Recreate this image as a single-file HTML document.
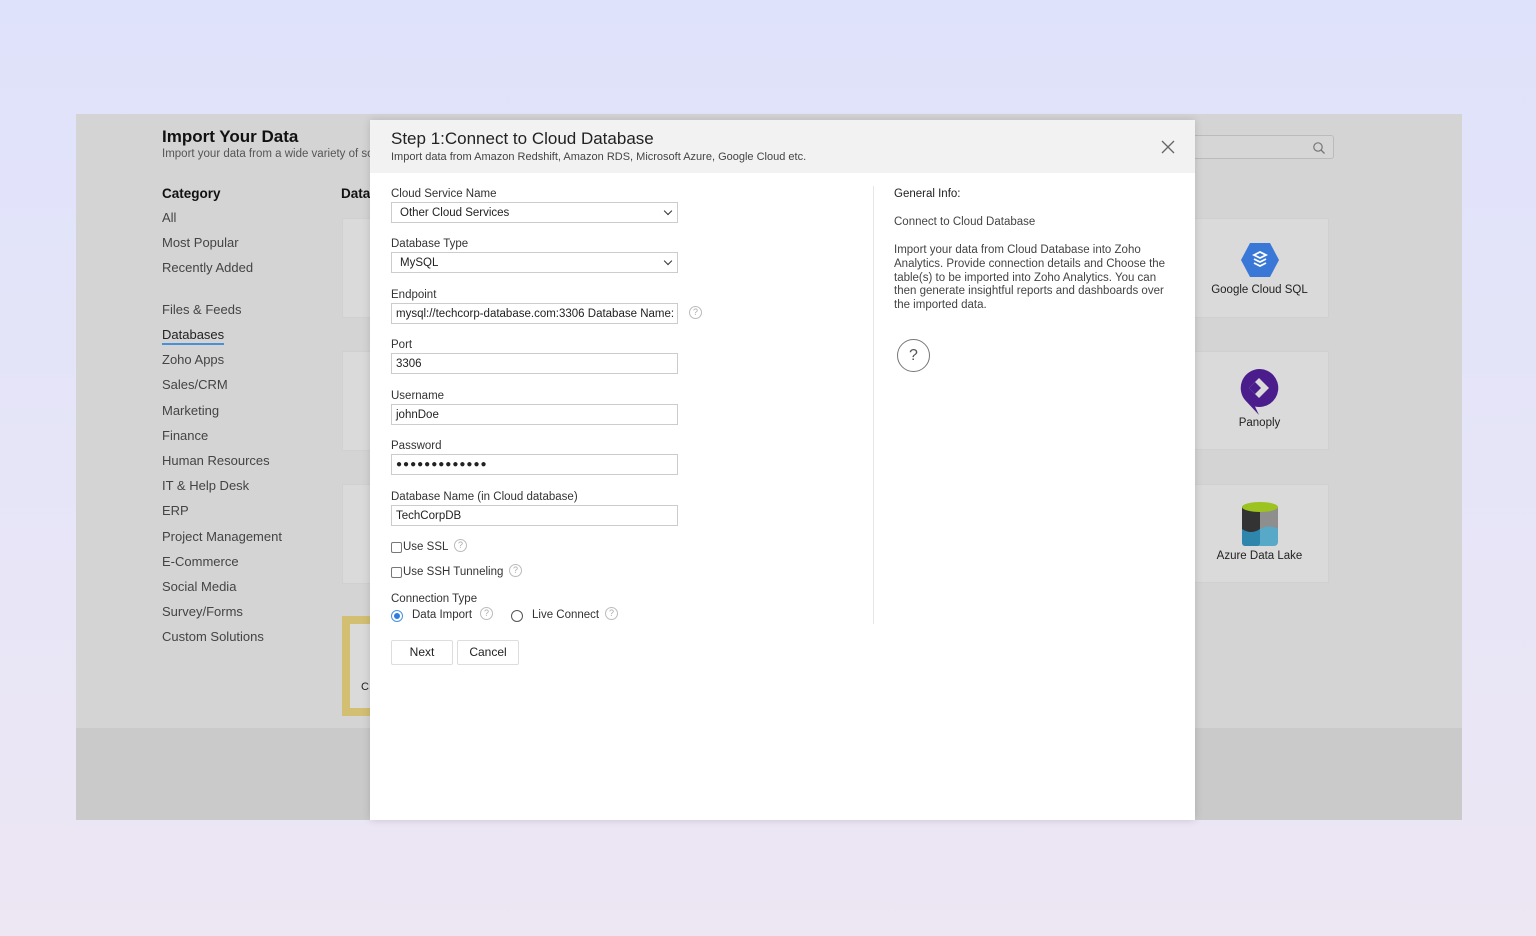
<!DOCTYPE html>
<html><head><style>
*{box-sizing:border-box;margin:0;padding:0}
body{width:1536px;height:936px;overflow:hidden;background:linear-gradient(180deg,#dfe2fb 0%,#e6e5f8 50%,#ede6f3 100%);font-family:"Liberation Sans",sans-serif;position:relative;color:#222}
.abs{position:absolute}
.panel{left:76px;top:114px;width:1386px;height:706px;background:#d4d4d4}
.panel .bot{position:absolute;left:0;top:614px;width:100%;height:92px;background:#cacaca}
.cat{left:162px;font-size:13px;color:#444}
.card{background:#dadada;border:1px solid #d0d0d0}
.modal{left:370px;top:120px;width:825px;height:700px;background:#fff;box-shadow:0 0 8px rgba(0,0,0,.15)}
.hdr{position:absolute;left:0;top:0;width:100%;height:53px;background:#f2f2f2}
.lbl{position:absolute;left:21px;font-size:11.5px;color:#333}
.inp{position:absolute;left:21px;width:287px;height:21px;border:1px solid #ccc;background:#fff;font-size:11.5px;padding:4px 4px 3px;color:#222;white-space:nowrap;overflow:hidden}
.sel{padding-left:8px}
.sel:after{content:"";position:absolute;right:6px;top:5px;width:5px;height:5px;border-right:1.3px solid #333;border-bottom:1.3px solid #333;transform:rotate(45deg)}
.q{position:absolute;width:13px;height:13px;border:1px solid #bbb;border-radius:50%;font-size:9px;color:#aaa;text-align:center;line-height:11px}
.btn{position:absolute;top:520px;height:25px;border:1px solid #ddd;border-radius:2px;font-size:12px;text-align:center;line-height:23px;background:#fff}
</style></head><body>
<div class="abs panel"><div class="bot"></div></div>
<div class="abs" style="left:162px;top:127px;font-size:17px;font-weight:bold;color:#111">Import Your Data</div>
<div class="abs" style="left:162px;top:148px;font-size:11.5px;color:#555;width:210px;overflow:hidden;white-space:nowrap">Import your data from a wide variety of sources</div>
<div class="abs" style="left:162px;top:186px;font-size:13.5px;font-weight:bold;color:#111">Category</div>
<div class="abs" style="left:341px;top:186px;font-size:13.5px;font-weight:bold;color:#111">Data</div>
<div class="abs cat" style="top:210px">All</div>
<div class="abs cat" style="top:235px">Most Popular</div>
<div class="abs cat" style="top:260px">Recently Added</div>
<div class="abs cat" style="top:302px">Files &amp; Feeds</div>
<div class="abs cat" style="top:327px;color:#222;border-bottom:2px solid #4a90d9;padding-bottom:1px">Databases</div>
<div class="abs cat" style="top:352px">Zoho Apps</div>
<div class="abs cat" style="top:377px">Sales/CRM</div>
<div class="abs cat" style="top:403px">Marketing</div>
<div class="abs cat" style="top:428px">Finance</div>
<div class="abs cat" style="top:453px">Human Resources</div>
<div class="abs cat" style="top:478px">IT &amp; Help Desk</div>
<div class="abs cat" style="top:503px">ERP</div>
<div class="abs cat" style="top:529px">Project Management</div>
<div class="abs cat" style="top:554px">E-Commerce</div>
<div class="abs cat" style="top:579px">Social Media</div>
<div class="abs cat" style="top:604px">Survey/Forms</div>
<div class="abs cat" style="top:629px">Custom Solutions</div>
<div class="abs card" style="left:342px;top:218px;width:40px;height:100px"></div>
<div class="abs card" style="left:342px;top:351px;width:40px;height:100px"></div>
<div class="abs card" style="left:342px;top:484px;width:40px;height:100px"></div>
<div class="abs" style="left:342px;top:616px;width:40px;height:100px;border:8px solid #d3bf72;background:#dadada"></div>
<div class="abs" style="left:361px;top:681px;font-size:11px">C.</div>
<div class="abs" style="left:1190px;top:135px;width:144px;height:24px;border:1px solid #bbb;border-radius:3px;background:#d6d6d6"><svg width="14" height="14" style="position:absolute;right:7px;top:5px"><circle cx="6" cy="6" r="4.2" fill="none" stroke="#777" stroke-width="1.2"/><path d="M9 9l3.5 3.5" stroke="#777" stroke-width="1.3"/></svg></div>
<div class="abs card" style="left:1190px;top:218px;width:139px;height:100px"></div>
<div class="abs card" style="left:1190px;top:351px;width:139px;height:99px"></div>
<div class="abs card" style="left:1190px;top:484px;width:139px;height:99px"></div>
<svg class="abs" style="left:1240px;top:242px" width="40" height="36"><polygon points="10,1 30,1 39,18 30,35 10,35 1,18" fill="#3a78d8"/><path d="M14 13l6-3 6 3-6 3z M14 17l6 3 6-3 M14 21l6 3 6-3" fill="none" stroke="#fff" stroke-width="1.8"/></svg>
<div class="abs" style="left:1190px;top:284px;width:139px;text-align:center;font-size:11.5px">Google Cloud SQL</div>
<svg class="abs" style="left:1240px;top:368px" width="40" height="48"><path d="M20 1a19 19 0 1 1-5 37.5L19 47 5 32A19 19 0 0 1 20 1z" fill="#4b1d8c"/><path d="M9 20l10-10 10 10-10 10z" fill="#dadada"/><path d="M9 20l6-6 6 6-6 6z" fill="#4b1d8c"/></svg>
<div class="abs" style="left:1190px;top:417px;width:139px;text-align:center;font-size:11.5px">Panoply</div>
<svg class="abs" style="left:1241px;top:501px" width="38" height="48"><rect x="1" y="5" width="36" height="40" rx="4" fill="#58a8c8"/><rect x="1" y="5" width="18" height="40" rx="3" fill="#2f86ad"/><path d="M1 6h18v22q-9 6-18 0z" fill="#333"/><path d="M19 6h18v22q-9 -5-18 0z" fill="#8e8e8e"/><ellipse cx="19" cy="6" rx="18" ry="5" fill="#9cc320"/></svg>
<div class="abs" style="left:1190px;top:550px;width:139px;text-align:center;font-size:11.5px">Azure Data Lake</div>

<div class="abs modal">
 <div class="hdr"></div>
 <div class="abs" style="left:21px;top:9px;font-size:17px;color:#222">Step 1:Connect to Cloud Database</div>
 <div class="abs" style="left:21px;top:31px;font-size:11px;color:#444">Import data from Amazon Redshift, Amazon RDS, Microsoft Azure, Google Cloud etc.</div>
 <svg class="abs" style="left:791px;top:20px" width="14" height="14"><path d="M1 1l12 12M13 1L1 13" stroke="#666" stroke-width="1.3"/></svg>
 <div class="abs" style="left:503px;top:66px;width:1px;height:438px;background:#e6e6e6"></div>
 <div class="lbl" style="top:68px">Cloud Service Name</div>
 <div class="inp sel" style="top:82px">Other Cloud Services</div>
 <div class="lbl" style="top:118px">Database Type</div>
 <div class="inp sel" style="top:132px">MySQL</div>
 <div class="lbl" style="top:169px">Endpoint</div>
 <div class="inp" style="top:183px">mysql://techcorp-database.com:3306 Database Name: TechCorpDB</div>
 <div class="q" style="left:319px;top:186px">?</div>
 <div class="lbl" style="top:219px">Port</div>
 <div class="inp" style="top:233px">3306</div>
 <div class="lbl" style="top:270px">Username</div>
 <div class="inp" style="top:284px">johnDoe</div>
 <div class="lbl" style="top:320px">Password</div>
 <div class="inp" style="top:334px;letter-spacing:1px;font-size:10px">●●●●●●●●●●●●●</div>
 <div class="lbl" style="top:371px">Database Name (in Cloud database)</div>
 <div class="inp" style="top:385px">TechCorpDB</div>
 <div class="abs" style="left:21px;top:422px;width:11px;height:11px;border:1px solid #777;border-radius:2px"></div>
 <div class="lbl" style="left:33px;top:421px">Use SSL</div>
 <div class="q" style="left:84px;top:419px">?</div>
 <div class="abs" style="left:21px;top:447px;width:11px;height:11px;border:1px solid #777;border-radius:2px"></div>
 <div class="lbl" style="left:33px;top:446px">Use SSH Tunneling</div>
 <div class="q" style="left:139px;top:444px">?</div>
 <div class="lbl" style="top:473px">Connection Type</div>
 <div class="abs" style="left:21px;top:490px;width:12px;height:12px;border:1px solid #4a90e2;border-radius:50%"><div style="margin:2px;width:6px;height:6px;border-radius:50%;background:#2f7de0"></div></div>
 <div class="lbl" style="left:42px;top:489px">Data Import</div>
 <div class="q" style="left:110px;top:487px">?</div>
 <div class="abs" style="left:141px;top:490px;width:12px;height:12px;border:1px solid #555;border-radius:50%"></div>
 <div class="lbl" style="left:162px;top:489px">Live Connect</div>
 <div class="q" style="left:235px;top:487px">?</div>
 <div class="btn" style="left:21px;width:62px">Next</div>
 <div class="btn" style="left:87px;width:62px">Cancel</div>
 <div class="abs" style="left:524px;top:68px;font-size:11.5px;color:#222">General Info:</div>
 <div class="abs" style="left:524px;top:96px;font-size:11.5px;color:#444">Connect to Cloud Database</div>
 <div class="abs" style="left:524px;top:124px;width:275px;font-size:11.5px;line-height:13.8px;color:#444">Import your data from Cloud Database into Zoho Analytics. Provide connection details and Choose the table(s) to be imported into Zoho Analytics. You can then generate insightful reports and dashboards over the imported data.</div>
 <div class="abs" style="left:527px;top:219px;width:33px;height:33px;border:1px solid #777;border-radius:50%;text-align:center;line-height:31px;font-size:16px;color:#555">?</div>
</div>
</body></html>
